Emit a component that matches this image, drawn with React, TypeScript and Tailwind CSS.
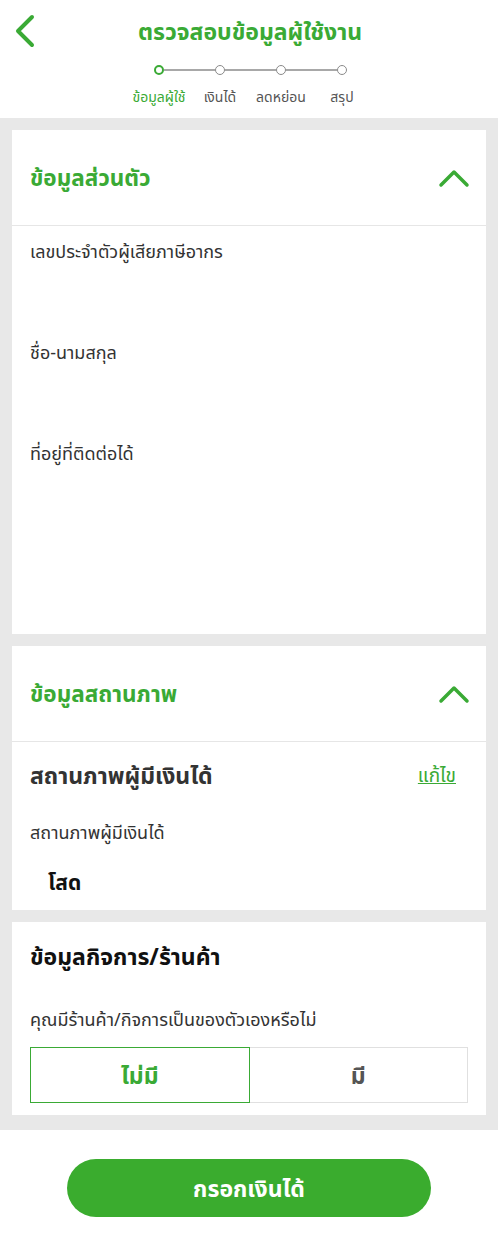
import React from 'react';

const font = { fontFamily: '"Noto Sans", "Noto Sans Thai", "Loma", sans-serif' };

function Chevron({ up }: { up?: boolean }) {
  return (
    <svg width="32" height="20" viewBox="0 0 32 20" fill="none">
      <path
        d={up ? 'M3 17 L16 4 L29 17' : 'M3 3 L16 16 L29 3'}
        stroke="#3aaa35"
        strokeWidth="3.5"
        strokeLinecap="round"
        strokeLinejoin="round"
      />
    </svg>
  );
}

function Stepper() {
  const labels = ['ข้อมูลผู้ใช้', 'เงินได้', 'ลดหย่อน', 'สรุป'];
  return (
    <div className="flex flex-col items-center pl-[3px]">
      <div className="flex items-center">
        <div className="w-[10px] h-[10px] rounded-full border-[2.5px] border-[#3aaa35] bg-white" />
        {[1, 2, 3].map((i) => (
          <React.Fragment key={i}>
            <div className="w-[51px] h-[2px] bg-[#a8a8a8]" />
            <div className="w-[10px] h-[10px] rounded-full border border-[#8a8a8a] bg-white" />
          </React.Fragment>
        ))}
      </div>
      <div className="grid grid-cols-4 w-[244px] mt-[12px]">
        {labels.map((l, i) => (
          <div
            key={l}
            className={`text-center text-[14px] whitespace-nowrap leading-[20px] ${i === 0 ? 'text-[#3aaa35]' : 'text-[#555]'}`}
          >
            {l}
          </div>
        ))}
      </div>
    </div>
  );
}

function CardHeader({ title }: { title: string }) {
  return (
    <div className="flex items-center justify-between h-[96px] pl-[18px] pr-[16px] border-b border-[#e6e6e6]">
      <div className="text-[22.5px] font-bold text-[#3aaa35]">{title}</div>
      <Chevron up />
    </div>
  );
}

export default function App() {
  return (
    <div className="w-[498px] min-h-[1233px] bg-white flex flex-col" style={font}>
      {/* header */}
      <div className="h-[118px] bg-white relative pt-[13px]">
        <div className="absolute left-[13px] top-[14px]">
          <svg width="24" height="34" viewBox="0 0 24 34" fill="none">
            <path d="M19 3 L5 17 L19 31" stroke="#3aaa35" strokeWidth="4" strokeLinecap="round" strokeLinejoin="round" />
          </svg>
        </div>
        <div className="text-center text-[23px] font-bold text-[#3aaa35] leading-[36px] pl-[2px]">
          ตรวจสอบข้อมูลผู้ใช้งาน
        </div>
        <div className="mt-[16px]">
          <Stepper />
        </div>
      </div>

      {/* body */}
      <div className="bg-[#e8e8e8] px-[12px] pt-[12px] pb-[15px] flex flex-col gap-[12px]">
        <div className="bg-white h-[504px]">
          <CardHeader title="ข้อมูลส่วนตัว" />
          <div className="px-[18px] pt-[12px] flex flex-col gap-[74px] text-[18px] text-[#333] leading-[27px]">
            <div>เลขประจำตัวผู้เสียภาษีอากร</div>
            <div>ชื่อ-นามสกุล</div>
            <div>ที่อยู่ที่ติดต่อได้</div>
          </div>
        </div>

        <div className="bg-white h-[264px]">
          <CardHeader title="ข้อมูลสถานภาพ" />
          <div className="px-[18px] pt-[17px]">
            <div className="flex items-center justify-between pr-[12px]">
              <div className="text-[23px] font-bold text-[#333] leading-[32px]">สถานภาพผู้มีเงินได้</div>
              <div className="text-[19px] text-[#3aaa35] underline">แก้ไข</div>
            </div>
            <div className="mt-[28px] text-[18px] text-[#333] leading-[27px]">สถานภาพผู้มีเงินได้</div>
            <div className="mt-[22px] pl-[18px] text-[21px] font-bold text-[#111] leading-[28px]">โสด</div>
          </div>
        </div>

        <div className="bg-white h-[193px] px-[18px] pt-[18px]">
          <div className="text-[23px] font-bold text-[#111] leading-[32px]">ข้อมูลกิจการ/ร้านค้า</div>
          <div className="mt-[34px] text-[18px] text-[#333] leading-[27px]">คุณมีร้านค้า/กิจการเป็นของตัวเองหรือไม่</div>
          <div className="mt-[14px] flex h-[56px] w-[438px]">
            <div className="flex-1 border-[1.5px] border-[#3aaa35] flex items-center justify-center text-[23px] font-bold text-[#3aaa35]">
              ไม่มี
            </div>
            <div className="flex-1 border border-l-0 border-[#e0e0e0] flex items-center justify-center text-[23px] font-bold text-[#555]">
              มี
            </div>
          </div>
        </div>
      </div>

      {/* footer */}
      <div className="flex-1 bg-white flex justify-center pt-[29px]">
        <button className="w-[364px] h-[58px] rounded-full bg-[#3aac2e] text-white text-[23px] font-bold">
          กรอกเงินได้
        </button>
      </div>
    </div>
  );
}
